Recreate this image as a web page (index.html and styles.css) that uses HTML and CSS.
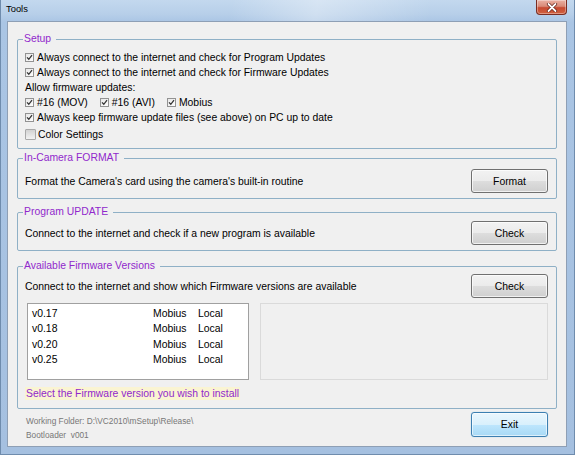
FILE: index.html
```html
<!DOCTYPE html>
<html>
    <head>
        <title>Tools</title>
        <meta charset="utf-8"/>
        <link rel="stylesheet" href="styles.css">
    </head>
    <body>
        <div class="window">
            <div class="titlebar">
                <span class="title">Tools</span>
                <span class="close">
                    <svg width="12" height="9" viewBox="0 0 12 9">
                        <path d="M2.5 1 L9.5 8 M9.5 1 L2.5 8" stroke="#5a1a10" stroke-width="3.2" stroke-linecap="round"/>
                        <path d="M2.5 1 L9.5 8 M9.5 1 L2.5 8" stroke="#fff" stroke-width="1.8" stroke-linecap="round"/>
                    </svg>
                </span>
            </div>
            <div class="client">
                <fieldset class="group setup">
                    <legend>Setup</legend>
                    <div class="check"><span class="box on"></span>Always connect to the internet and check for Program Updates</div>
                    <div class="check"><span class="box on"></span>Always connect to the internet and check for Firmware Updates</div>
                    <div class="check">Allow firmware updates:</div>
                    <div class="check inline">
                        <span class="item"><span class="box on"></span>#16 (MOV)</span>
                        <span class="item"><span class="box on"></span>#16 (AVI)</span>
                        <span class="item"><span class="box on"></span>Mobius</span>
                    </div>
                    <div class="check"><span class="box on"></span>Always keep firmware update files (see above) on PC up to date</div>
                    <div class="check color"><span class="box big"></span>Color Settings</div>
                </fieldset>

                <fieldset class="group format">
                    <legend>In-Camera FORMAT</legend>
                    <div class="action">
                        <span>Format the Camera's card using the camera's built-in routine</span>
                        <button class="btn">Format</button>
                    </div>
                </fieldset>

                <fieldset class="group program">
                    <legend>Program UPDATE</legend>
                    <div class="action">
                        <span>Connect to the internet and check if a new program is available</span>
                        <button class="btn">Check</button>
                    </div>
                </fieldset>

                <fieldset class="group firmware">
                    <legend>Available Firmware Versions</legend>
                    <div class="action">
                        <span>Connect to the internet and show which Firmware versions are available</span>
                        <button class="btn">Check</button>
                    </div>
                    <div class="lists">
                        <ul class="listbox">
                            <li><span>v0.17</span><span>Mobius</span><span>Local</span></li>
                            <li><span>v0.18</span><span>Mobius</span><span>Local</span></li>
                            <li><span>v0.20</span><span>Mobius</span><span>Local</span></li>
                            <li><span>v0.25</span><span>Mobius</span><span>Local</span></li>
                        </ul>
                        <div class="panel"></div>
                    </div>
                    <p class="hint"><span>Select the Firmware version you wish to install</span></p>
                </fieldset>

                <div class="footer">
                    <div class="info">
                        <div>Working Folder: D:\VC2010\mSetup\Release\</div>
                        <div>Bootloader&nbsp; v001</div>
                    </div>
                    <button class="btn default">Exit</button>
                </div>
            </div>
        </div>
    </body>
</html>
```

FILE: styles.css
```css
*{
    margin: 0;
    padding: 0;
    box-sizing: border-box;
}
ul,li{
    list-style-type: none;
}
body{
    font-family: "Liberation Sans", Arial, sans-serif;
    font-size: 10.4px;
    color: #000;
    background: #fff;
}
.window{
    width: 575px;
    height: 455px;
    display: flex;
    flex-direction: column;
    padding: 0 7px 7px 6px;
    background: linear-gradient(180deg, #c3d8ee 0px, #b7cfe9 14px, #aac5e4 22px, #a5c0e0 100%);
    border: 1px solid #6f8cad;
    border-top: none;
}
.titlebar{
    height: 21px;
    display: flex;
    align-items: flex-start;
    background: linear-gradient(100deg, rgba(255,255,255,0) 40%, rgba(255,255,255,.35) 55%, rgba(255,255,255,0) 75%);
    margin: 0 -7px 0 -6px;
    padding: 0 7px 0 5px;
}
.titlebar .title{
    font-size: 9.4px;
    line-height: 12px;
    margin-top: 3px;
}
.titlebar .close{
    margin-left: auto;
    width: 31px;
    height: 15px;
    display: flex;
    align-items: center;
    justify-content: center;
    border: 1px solid #7a2d22;
    border-top: none;
    border-radius: 0 0 4px 4px;
    background: linear-gradient(180deg, #eab1a3 0%, #d98a77 45%, #c74a31 55%, #d0613f 100%);
    box-shadow: inset 0 0 0 1px rgba(255,255,255,.35);
}
.client{
    flex: 1;
    background: #f0f0f0;
    border: 1px solid #8e9fb5;
    padding: 11px 9px 0 9px;
}
.group{
    border: 1px solid #8fb0c6;
    border-radius: 2px;
    padding: 0 8px 5px 7px;
    min-width: 0;
}
.group legend{
    color: #9128cc;
    line-height: 12px;
    padding: 0 5px 0 1px;
    margin-left: -2px;
}
.setup{
    padding-top: 5px;
    padding-bottom: 6px;
}
.check{
    height: 15px;
    display: flex;
    align-items: center;
    white-space: nowrap;
}
.check.inline .item{
    display: flex;
    align-items: center;
    margin-right: 12px;
}
.check.color{
    margin-top: 2px;
}
.box{
    width: 9px;
    height: 9px;
    margin-right: 3px;
    border: 1px solid #929292;
    background: linear-gradient(135deg, #e4e4e4, #fdfdfd);
}
.box.on{
    background: url("data:image/svg+xml;utf8,<svg xmlns='http://www.w3.org/2000/svg' width='7' height='7' viewBox='0 0 7 7'><path d='M1 3.4 L2.8 5.3 L6 1.2' fill='none' stroke='%23353535' stroke-width='1.3'/></svg>") center no-repeat, linear-gradient(135deg, #e8e8e8, #fdfdfd);
}
.box.big{
    width: 11px;
    height: 11px;
    margin-right: 2px;
    border-color: #a9a9a9;
    border-radius: 1px;
    background: linear-gradient(180deg, #d2d2d2, #e6e6e6 60%, #f2f2f2);
}
.format{
    margin-top: 3px;
    padding-top: 5px;
}
.program{
    margin-top: 7px;
    padding-top: 3px;
}
.firmware{
    margin-top: 9px;
    padding-top: 2px;
    padding-bottom: 7px;
}
.action{
    display: flex;
    align-items: center;
    justify-content: space-between;
}
.btn{
    width: 77px;
    height: 24px;
    font-family: "Liberation Sans", Arial, sans-serif;
    font-size: 10.4px;
    color: #000;
    border: 1px solid #707070;
    border-radius: 3px;
    background: linear-gradient(180deg, #f2f2f2 0%, #ebebeb 50%, #dddddd 51%, #cfcfcf 100%);
    box-shadow: inset 0 0 0 1px rgba(255,255,255,.7);
}
.btn.default{
    height: 25px;
    border-color: #3c7fb1;
    background: linear-gradient(180deg, #eaf6fd 0%, #d9f0fc 50%, #bee6fd 51%, #a7d9f5 100%);
    box-shadow: inset 0 0 0 1px rgba(255,255,255,.6), 0 0 1px #7ec4ea;
}
.lists{
    display: flex;
    gap: 11px;
    margin: 5px 0 0 2px;
}
.listbox{
    width: 222px;
    height: 77px;
    background: #fff;
    border: 1px solid #a0a0a0;
    padding: 2px 0 0 4px;
}
.listbox li{
    height: 15.3px;
    line-height: 15px;
    display: grid;
    grid-template-columns: 121px 45px auto;
}
.panel{
    flex: 1;
    height: 77px;
    border: 1px solid #dadada;
}
.hint{
    margin-top: 7px;
    line-height: 14px;
    color: #9128cc;
}
.hint span{
    background: #faf4d2;
    padding: 1px 1px;
}
.footer{
    display: flex;
    justify-content: space-between;
    align-items: flex-start;
    margin-top: 3px;
    padding: 0 9px;
}
.footer .info{
    font-size: 8.3px;
    line-height: 14px;
    color: #777;
    padding-top: 2px;
}
```
